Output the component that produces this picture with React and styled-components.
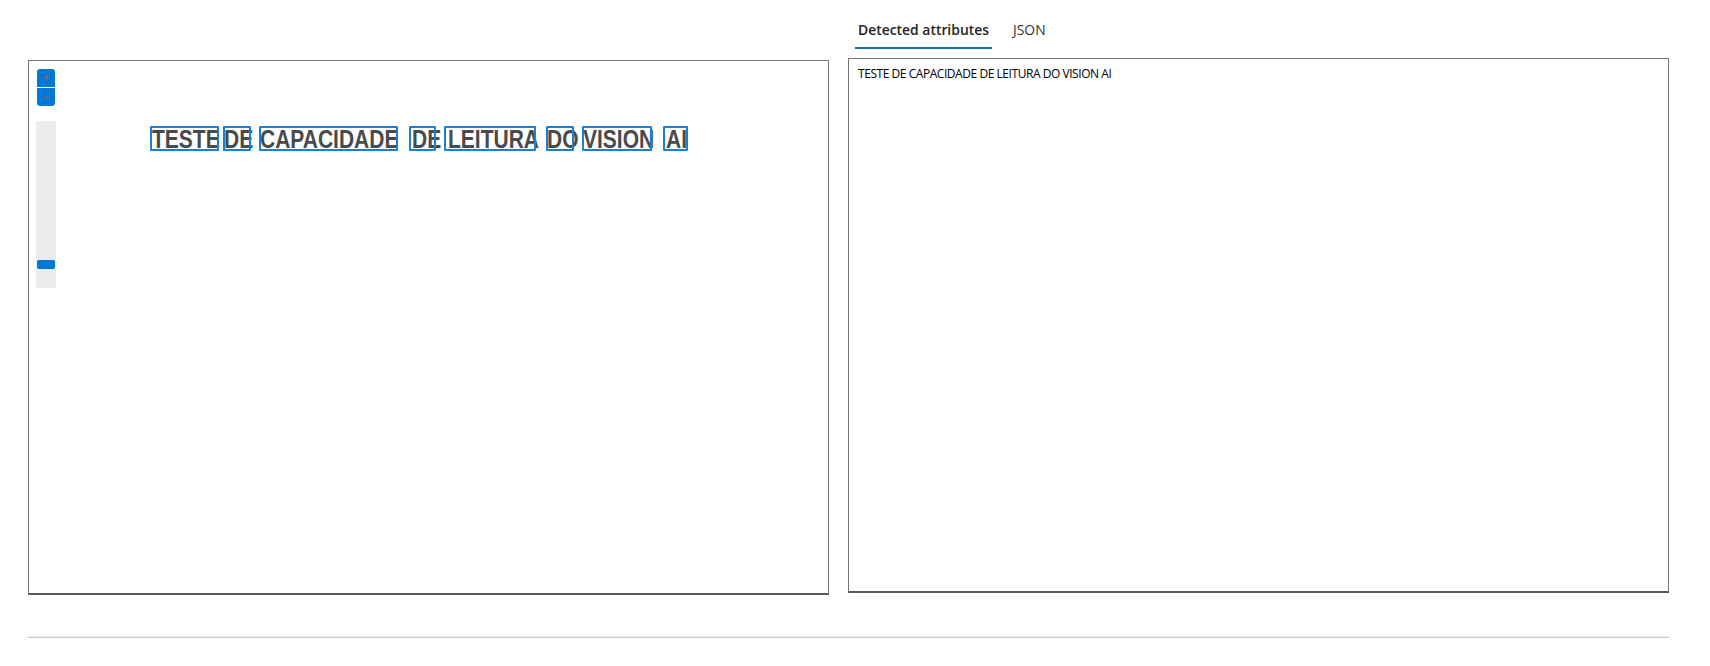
import React from "react";
import styled, { createGlobalStyle } from "styled-components";

const GlobalStyle = createGlobalStyle`
    html, body {
        margin: 0;
        padding: 0;
        background: #ffffff;
    }
    body {
        font-family: "Open Sans", "Noto Sans", Arial, sans-serif;
        color: #242424;
    }
`;

const recognizedText = "TESTE DE CAPACIDADE DE LEITURA DO VISION AI";

const words = [
    { text: "TESTE", textX: 123, boxX: 121, boxW: 69 },
    { text: "DE", textX: 195, boxX: 194, boxW: 28 },
    { text: "CAPACIDADE", textX: 231, boxX: 230, boxW: 139 },
    { text: "DE", textX: 383, boxX: 380, boxW: 27 },
    { text: "LEITURA", textX: 419, boxX: 415, boxW: 92 },
    { text: "DO", textX: 518, boxX: 517, boxW: 28 },
    { text: "VISION", textX: 554, boxX: 553, boxW: 70 },
    { text: "AI", textX: 637, boxX: 634, boxW: 25 },
];

export default function App() {
    return (
        <>
            <GlobalStyle />
            <Page>
                <Columns>
                    <LeftColumn>
                        <CanvasPanel>
                            <Controls>
                                <ZoomGroup>
                                    <ZoomButton $top>+</ZoomButton>
                                    <ZoomButton>−</ZoomButton>
                                </ZoomGroup>
                                <SliderTrack>
                                    <SliderThumb />
                                </SliderTrack>
                            </Controls>

                            {words.map((w, i) => (
                                <Word key={"w" + i} style={{ left: w.textX }}>
                                    {w.text}
                                </Word>
                            ))}
                            {words.map((w, i) => (
                                <WordBox
                                    key={"b" + i}
                                    style={{ left: w.boxX, width: w.boxW }}
                                />
                            ))}
                        </CanvasPanel>
                    </LeftColumn>

                    <RightColumn>
                        <TabList>
                            <Tab $active>Detected attributes</Tab>
                            <Tab>JSON</Tab>
                        </TabList>
                        <ResultPanel>
                            <ResultLine>{recognizedText}</ResultLine>
                        </ResultPanel>
                    </RightColumn>
                </Columns>
                <Divider />
            </Page>
        </>
    );
}

const Page = styled.div`
    width: 1710px;
    height: 666px;
    padding: 0 41px 0 28px;
    box-sizing: border-box;
    overflow: hidden;
`;

const Columns = styled.div`
    display: flex;
    align-items: flex-start;
    gap: 19px;
`;

const LeftColumn = styled.div`
    padding-top: 60px;
    width: 801px;
    flex: none;
`;

const RightColumn = styled.div`
    flex: 1;
    display: flex;
    flex-direction: column;
`;

const Panel = styled.div`
    box-sizing: border-box;
    height: 535px;
    border: 1px solid #747474;
    border-bottom: 2px solid #585858;
    background: #ffffff;
`;

const CanvasPanel = styled(Panel)`
    position: relative;
    overflow: hidden;
`;

const Controls = styled.div`
    position: absolute;
    left: 7px;
    top: 8px;
    display: flex;
    flex-direction: column;
    align-items: center;
    z-index: 2;
`;

const ZoomGroup = styled.div`
    display: flex;
    flex-direction: column;
    gap: 1px;
    width: 18px;
`;

const ZoomButton = styled.div`
    width: 18px;
    height: 18px;
    background: #0078d4;
    border-radius: ${(p) => (p.$top ? "3px 3px 0 0" : "0 0 3px 3px")};
    color: #a0683c;
    font-family: "Liberation Sans", Arial, sans-serif;
    font-size: 12px;
    line-height: 18px;
    text-align: center;
`;

const SliderTrack = styled.div`
    position: relative;
    margin-top: 15px;
    width: 20px;
    height: 167px;
    background: #ececec;
    border-radius: 3px;
`;

const SliderThumb = styled.div`
    position: absolute;
    left: 1px;
    top: 139px;
    width: 18px;
    height: 9px;
    background: #0078d4;
    border-radius: 2px;
`;

const Word = styled.span`
    position: absolute;
    top: 67.3px;
    height: 20px;
    line-height: 20px;
    font-family: "Liberation Sans", Arial, sans-serif;
    font-weight: 700;
    font-size: 21px;
    color: #4a4a4a;
    white-space: nowrap;
    transform: scaleY(1.19);
    transform-origin: 0 0;
`;

const WordBox = styled.div`
    position: absolute;
    top: 65px;
    height: 25px;
    box-sizing: border-box;
    border: 2px solid #1a7fd6;
    border-radius: 1px;
`;

const TabList = styled.div`
    display: flex;
    gap: 18px;
    margin-left: 7px;
    padding-top: 20px;
`;

const Tab = styled.div`
    padding: 0 3px 7px;
    font-size: 13.9px;
    line-height: 20px;
    font-weight: ${(p) => (p.$active ? 600 : 400)};
    color: ${(p) => (p.$active ? "#242424" : "#323130")};
    border-bottom: 2px solid ${(p) => (p.$active ? "#0f6cbd" : "transparent")};
`;

const ResultPanel = styled(Panel)`
    margin-top: 9px;
    padding: 7px 9px;
`;

const ResultLine = styled.div`
    font-size: 12px;
    line-height: 16px;
    letter-spacing: -0.45px;
    color: #000000;
    white-space: nowrap;
`;

const Divider = styled.div`
    margin-top: 41px;
    height: 1px;
    border-top: 1px solid #ededed;
    background: #c8c8c8;
`;
